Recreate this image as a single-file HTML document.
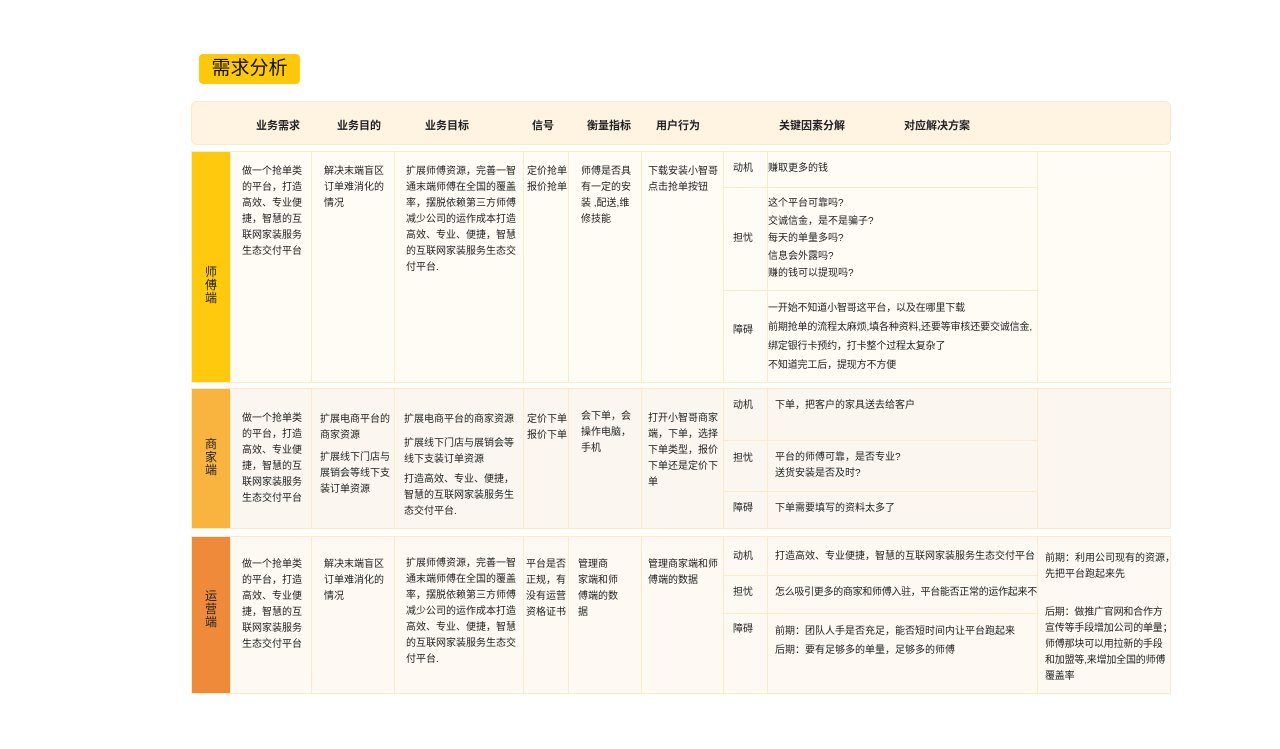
<!DOCTYPE html>
<html><head><meta charset="utf-8"><style>
*{margin:0;padding:0;box-sizing:border-box}
body{width:1280px;height:749px;background:#fff;position:relative;overflow:hidden;font-family:"Liberation Sans","Noto Sans CJK SC",sans-serif;color:#222;font-size:10px;line-height:16px}
.a{position:absolute}
.c{position:absolute;border:1px solid #FCEBC9}
.t{position:absolute;line-height:16px;font-size:10px}
.h{position:absolute;top:117px;font-size:11px;font-weight:bold;line-height:18px}
.lab{position:absolute;width:38px;color:#222;font-size:12px;line-height:13px;text-align:center}
</style></head><body>
<div class="a" style="left:199px;top:54px;width:101px;height:30px;background:#FFC80B;border-radius:4px;font-size:19px;line-height:30px;text-align:center;color:#111">需求分析</div>

<div class="a" style="left:191px;top:101px;width:980px;height:44px;background:#FEF4E1;border:1px solid #FCE9C6;border-radius:6px"></div>
<div class="h" style="left:256px">业务需求</div>
<div class="h" style="left:337px">业务目的</div>
<div class="h" style="left:425px">业务目标</div>
<div class="h" style="left:532px">信号</div>
<div class="h" style="left:587px">衡量指标</div>
<div class="h" style="left:656px">用户行为</div>
<div class="h" style="left:779px">关键因素分解</div>
<div class="h" style="left:904px">对应解决方案</div>

<!-- section 1 -->
<div class="a" style="left:191px;top:151px;width:980px;height:232px;background:#FFFCF5;border:1px solid #FCEBC9"></div>
<div class="a" style="left:192px;top:152px;width:38px;height:230px;background:#FFC90D"></div>
<div class="lab" style="left:192px;top:266px">师<br>傅<br>端</div>
<div class="c" style="left:230px;top:151px;width:82px;height:232px"></div>
<div class="c" style="left:311px;top:151px;width:84px;height:232px"></div>
<div class="c" style="left:394px;top:151px;width:130px;height:232px"></div>
<div class="c" style="left:523px;top:151px;width:46px;height:232px"></div>
<div class="c" style="left:568px;top:151px;width:74px;height:232px"></div>
<div class="c" style="left:641px;top:151px;width:83px;height:232px"></div>
<div class="c" style="left:723px;top:151px;width:45px;height:37px"></div>
<div class="c" style="left:767px;top:151px;width:271px;height:37px"></div>
<div class="c" style="left:723px;top:187px;width:45px;height:104px"></div>
<div class="c" style="left:767px;top:187px;width:271px;height:104px"></div>
<div class="c" style="left:723px;top:290px;width:45px;height:93px"></div>
<div class="c" style="left:767px;top:290px;width:271px;height:93px"></div>
<div class="t" style="left:242px;top:164px;width:64px">做一个抢单类的平台，打造高效、专业便捷，智慧的互联网家装服务生态交付平台</div>
<div class="t" style="left:324px;top:164px;width:62px">解决末端盲区订单难消化的情况</div>
<div class="t" style="left:406px;top:164px;width:113px">扩展师傅资源，完善一智通末端师傅在全国的覆盖率，摆脱依赖第三方师傅减少公司的运作成本打造高效、专业、便捷，智慧的互联网家装服务生态交付平台.</div>
<div class="t" style="left:527px;top:164px;width:42px">定价抢单报价抢单</div>
<div class="t" style="left:581px;top:164px;width:52px">师傅是否具有一定的安装 ,配送,维修技能</div>
<div class="t" style="left:648px;top:164px;width:72px">下载安装小智哥点击抢单按钮</div>
<div class="t" style="left:733px;top:161px">动机</div>
<div class="t" style="left:768px;top:161px">赚取更多的钱</div>
<div class="t" style="left:733px;top:231px">担忧</div>
<div class="t" style="left:768px;top:195px;line-height:17.5px">这个平台可靠吗?<br>交诚信金，是不是骗子?<br>每天的单量多吗?<br>信息会外露吗?<br>赚的钱可以提现吗?</div>
<div class="t" style="left:733px;top:323px">障碍</div>
<div class="t" style="left:768px;top:299px;line-height:19px;letter-spacing:-0.15px">一开始不知道小智哥这平台，以及在哪里下载<br>前期抢单的流程太麻烦,填各种资料,还要等审核还要交诚信金,<br>绑定银行卡预约，打卡整个过程太复杂了<br>不知道完工后，提现方不方便</div>

<!-- section 2 -->
<div class="a" style="left:191px;top:388px;width:980px;height:141px;background:#FBF7F0;border:1px solid #FCEBC9"></div>
<div class="a" style="left:192px;top:389px;width:38px;height:139px;background:#F9B43F"></div>
<div class="lab" style="left:192px;top:438px">商<br>家<br>端</div>
<div class="c" style="left:230px;top:388px;width:82px;height:141px"></div>
<div class="c" style="left:311px;top:388px;width:84px;height:141px"></div>
<div class="c" style="left:394px;top:388px;width:130px;height:141px"></div>
<div class="c" style="left:523px;top:388px;width:46px;height:141px"></div>
<div class="c" style="left:568px;top:388px;width:74px;height:141px"></div>
<div class="c" style="left:641px;top:388px;width:83px;height:141px"></div>
<div class="c" style="left:723px;top:388px;width:45px;height:53px"></div>
<div class="c" style="left:767px;top:388px;width:271px;height:53px"></div>
<div class="c" style="left:723px;top:440px;width:45px;height:52px"></div>
<div class="c" style="left:767px;top:440px;width:271px;height:52px"></div>
<div class="c" style="left:723px;top:491px;width:45px;height:38px"></div>
<div class="c" style="left:767px;top:491px;width:271px;height:38px"></div>
<div class="t" style="left:242px;top:411px;width:64px">做一个抢单类的平台，打造高效、专业便捷，智慧的互联网家装服务生态交付平台</div>
<div class="t" style="left:320px;top:412px;width:70px">扩展电商平台的商家资源</div>
<div class="t" style="left:320px;top:450px;width:70px">扩展线下门店与展销会等线下支装订单资源</div>
<div class="t" style="left:404px;top:412px;width:112px">扩展电商平台的商家资源</div>
<div class="t" style="left:404px;top:436px;width:112px">扩展线下门店与展销会等线下支装订单资源</div>
<div class="t" style="left:404px;top:472px;width:112px">打造高效、专业、便捷，智慧的互联网家装服务生态交付平台.</div>
<div class="t" style="left:527px;top:412px;width:42px">定价下单报价下单</div>
<div class="t" style="left:581px;top:409px;width:54px">会下单，会操作电脑，手机</div>
<div class="t" style="left:648px;top:411px;width:72px">打开小智哥商家端，下单，选择下单类型，报价下单还是定价下单</div>
<div class="t" style="left:733px;top:398px">动机</div>
<div class="t" style="left:775px;top:398px">下单，把客户的家具送去给客户</div>
<div class="t" style="left:733px;top:451px">担忧</div>
<div class="t" style="left:775px;top:450px">平台的师傅可靠，是否专业?<br>送货安装是否及时?</div>
<div class="t" style="left:733px;top:501px">障碍</div>
<div class="t" style="left:775px;top:501px">下单需要填写的资料太多了</div>

<!-- section 3 -->
<div class="a" style="left:191px;top:536px;width:980px;height:158px;background:#FEF9F3;border:1px solid #FCEBC9"></div>
<div class="a" style="left:192px;top:537px;width:38px;height:156px;background:#EE8A39"></div>
<div class="lab" style="left:192px;top:590px">运<br>营<br>端</div>
<div class="c" style="left:230px;top:536px;width:82px;height:158px"></div>
<div class="c" style="left:311px;top:536px;width:84px;height:158px"></div>
<div class="c" style="left:394px;top:536px;width:130px;height:158px"></div>
<div class="c" style="left:523px;top:536px;width:46px;height:158px"></div>
<div class="c" style="left:568px;top:536px;width:74px;height:158px"></div>
<div class="c" style="left:641px;top:536px;width:83px;height:158px"></div>
<div class="c" style="left:723px;top:536px;width:45px;height:40px"></div>
<div class="c" style="left:767px;top:536px;width:271px;height:40px"></div>
<div class="c" style="left:723px;top:575px;width:45px;height:39px"></div>
<div class="c" style="left:767px;top:575px;width:271px;height:39px"></div>
<div class="c" style="left:723px;top:613px;width:45px;height:81px"></div>
<div class="c" style="left:767px;top:613px;width:271px;height:81px"></div>
<div class="t" style="left:242px;top:557px;width:64px">做一个抢单类的平台，打造高效、专业便捷，智慧的互联网家装服务生态交付平台</div>
<div class="t" style="left:324px;top:557px;width:64px">解决末端盲区订单难消化的情况</div>
<div class="t" style="left:406px;top:556px;width:113px">扩展师傅资源，完善一智通末端师傅在全国的覆盖率，摆脱依赖第三方师傅减少公司的运作成本打造高效、专业、便捷，智慧的互联网家装服务生态交付平台.</div>
<div class="t" style="left:526px;top:557px;width:42px">平台是否正规，有没有运营资格证书</div>
<div class="t" style="left:578px;top:557px;white-space:nowrap">管理商<br>家端和师<br>傅端的数<br>据</div>
<div class="t" style="left:648px;top:557px;width:72px">管理商家端和师傅端的数据</div>
<div class="t" style="left:733px;top:549px">动机</div>
<div class="t" style="left:775px;top:549px">打造高效、专业便捷，智慧的互联网家装服务生态交付平台</div>
<div class="t" style="left:733px;top:585px">担忧</div>
<div class="t" style="left:775px;top:585px;letter-spacing:-0.3px">怎么吸引更多的商家和师傅入驻，平台能否正常的运作起来不</div>
<div class="t" style="left:733px;top:622px">障碍</div>
<div class="t" style="left:775px;top:622px;line-height:19px">前期：团队人手是否充足，能否短时间内让平台跑起来<br>后期：要有足够多的单量，足够多的师傅</div>
<div class="t" style="left:1045px;top:551px;width:130px">前期：利用公司现有的资源，先把平台跑起来先</div>
<div class="t" style="left:1045px;top:605px;white-space:nowrap;letter-spacing:-0.2px">后期：做推广官网和合作方<br>宣传等手段增加公司的单量；<br>师傅那块可以用拉新的手段<br>和加盟等,来增加全国的师傅<br>覆盖率</div>
</body></html>
